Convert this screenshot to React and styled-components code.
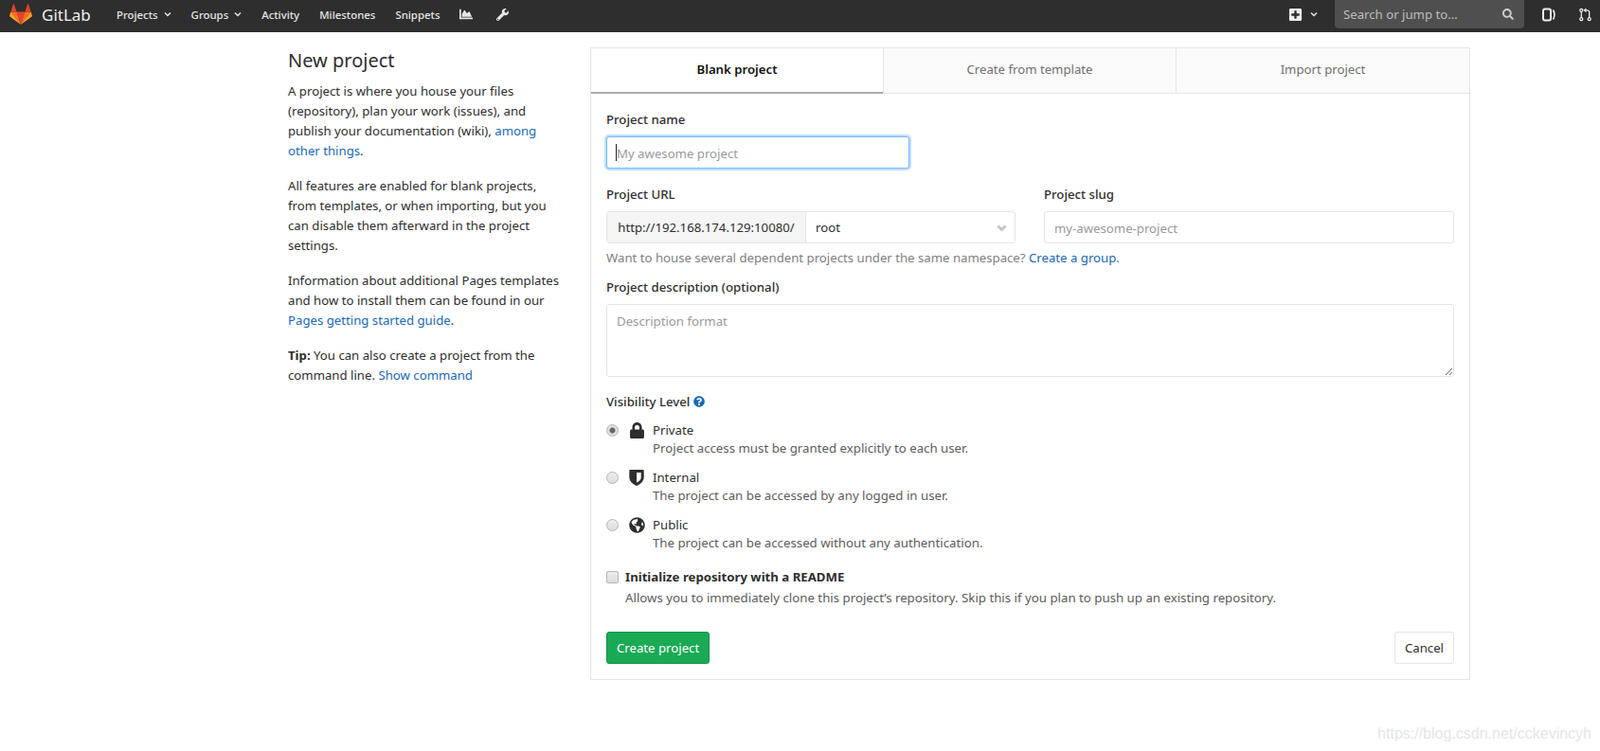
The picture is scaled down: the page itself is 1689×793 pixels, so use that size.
import React from "react";
import styled, { createGlobalStyle } from "styled-components";
import {
  FaChartArea,
  FaWrench,
  FaPlusSquare,
  FaSearch,
  FaLock,
  FaGlobeAmericas,
  FaQuestionCircle,
} from "react-icons/fa";

const GlobalStyle = createGlobalStyle`
  html, body {
    margin: 0;
    padding: 0;
    background: #fff;
    font-family: "Noto Sans", "Open Sans", sans-serif;
    font-size: 13.5px;
    color: #2e2e2e;
  }
  * { box-sizing: border-box; }
  a { color: #1b69b6; text-decoration: none; }
`;

const Page = styled.div`
  position: relative;
  height: 793px;
  overflow: hidden;
`;

const Navbar = styled.header`
  height: 34px;
  background: #2e2e2e;
  display: flex;
  align-items: flex-start;
  color: #e6e6e6;
`;

const Brand = styled.div`
  display: flex;
  align-items: center;
  gap: 10px;
  height: 30px;
  margin-left: 10px;
  width: 113px;
  font-size: 17px;
  color: #f0f0f0;
`;

const NavLinks = styled.nav`
  display: flex;
  align-items: center;
  height: 30px;
`;

const NavLink = styled.a`
  display: flex;
  align-items: center;
  gap: 6px;
  color: #e6e6e6;
  font-size: 11.4px;
  font-weight: 500;
  margin-right: ${(p) => p.$gap || 21}px;
`;

const NavRight = styled.div`
  margin-left: auto;
  display: flex;
  align-items: center;
  height: 30px;
  padding-right: 9px;
`;

const NavIcon = styled.span`
  display: flex;
  margin-right: ${(p) => p.$gap || 0}px;
`;

const SearchBox = styled.div`
  width: 200px;
  height: 30px;
  margin: 0 19px 0 18px;
  padding: 0 11px 0 9px;
  border-radius: 0 0 4px 4px;
  background: #4f4f4f;
  color: #bdbdbd;
  font-size: 13.2px;
  display: flex;
  align-items: center;
  justify-content: space-between;
`;

const Layout = styled.main`
  display: grid;
  grid-template-columns: 319px 929px;
  padding: 16px 0 0 304px;
`;

const Intro = styled.aside`
  width: 300px;
`;

const Title = styled.h1`
  margin: 0 0 8px;
  font-size: 20px;
  font-weight: 400;
  line-height: 28px;
`;

const IntroText = styled.p`
  margin: 0 0 16px;
  max-width: ${(p) => p.$width || 285}px;
  font-size: 13.2px;
  line-height: 21px;
  color: #2e2e2e;
`;

const Panel = styled.section`
  border: 1px solid #e5e5e5;
  height: 668px;
`;

const Tabs = styled.div`
  display: grid;
  grid-template-columns: 308px 309px 1fr;
  height: 48px;
`;

const Tab = styled.div`
  display: flex;
  align-items: center;
  justify-content: center;
  font-size: 13.2px;
  font-weight: ${(p) => (p.$active ? 600 : 400)};
  color: ${(p) => (p.$active ? "#111" : "#707070")};
  background: ${(p) => (p.$active ? "#fff" : "#fafafa")};
  border-bottom: ${(p) => (p.$active ? "2px solid #aaa" : "1px solid #e5e5e5")};
  border-left: ${(p) => (p.$first ? "none" : "1px solid #e5e5e5")};
  padding-bottom: ${(p) => (p.$active ? 2 : 3)}px;
`;

const Form = styled.form`
  padding: 17px 16px 0 16px;
`;

const Label = styled.label`
  display: block;
  font-size: 13.2px;
  font-weight: 500;
  line-height: 20px;
  color: #2e2e2e;
  margin-bottom: 8px;
`;

const InputWrap = styled.div`
  position: relative;
  width: ${(p) => p.$width || "100%"};
  margin-bottom: 17px;
`;

const TextInput = styled.input`
  display: block;
  width: 100%;
  height: 34px;
  padding: 1px 10px 0;
  font: inherit;
  font-size: 13.2px;
  color: #2e2e2e;
  background: #fff;
  border: 1px solid ${(p) => (p.$focus ? "#73b9ff" : "#e5e5e5")};
  border-radius: 3px;
  outline: none;
  box-shadow: ${(p) => (p.$focus ? "0 0 0 2px rgba(115,185,255,0.45)" : "none")};
  &::placeholder { color: #9a9a9a; opacity: 1; }
`;

const Caret = styled.span`
  position: absolute;
  left: 10px;
  top: 8px;
  width: 1px;
  height: 18px;
  background: #222;
`;

const UrlRow = styled.div`
  display: grid;
  grid-template-columns: 432px 433px;
  column-gap: 30px;
`;

const InputGroup = styled.div`
  display: flex;
  height: 34px;
  border: 1px solid #e5e5e5;
  border-radius: 3px;
  font-size: 13.2px;
`;

const Addon = styled.div`
  width: 210px;
  flex: none;
  display: flex;
  align-items: center;
  justify-content: center;
  background: #f5f5f5;
  border-right: 1px solid #e5e5e5;
  white-space: nowrap;
`;

const SelectBox = styled.div`
  flex: 1;
  display: flex;
  align-items: center;
  justify-content: space-between;
  padding: 0 8px 0 10px;
`;

const Help = styled.p`
  margin: 6px 0 ${(p) => p.$mb ?? 0}px;
  font-size: 13.2px;
  line-height: 19px;
  color: #808080;
`;

const TextArea = styled.textarea`
  display: block;
  width: 100%;
  height: 77px;
  padding: 8px 10px;
  font: inherit;
  font-size: 13.2px;
  border: 1px solid #e5e5e5;
  border-radius: 3px;
  outline: none;
  margin-bottom: 16px;
  &::placeholder { color: #9a9a9a; opacity: 1; }
`;

const VisibilityTitle = styled.div`
  display: flex;
  align-items: center;
  gap: 4px;
  font-size: 13.2px;
  font-weight: 500;
  line-height: 20px;
  margin-bottom: 10px;
  svg { color: #1b69b6; }
`;

const Option = styled.div`
  display: grid;
  grid-template-columns: 20px 29px 1fr;
  height: 50px;
`;

const Radio = styled.input.attrs({ type: "radio" })`
  appearance: none;
  width: 13px;
  height: 13px;
  margin: 4px 0 0 0;
  border-radius: 50%;
  border: 1px solid #b5b5b5;
  background: ${(p) =>
    p.defaultChecked
      ? "radial-gradient(circle, #666 0 2.5px, #e0e0e0 3.5px)"
      : "linear-gradient(#eee, #dcdcdc)"};
`;

const OptionIcon = styled.span`
  display: flex;
  justify-content: center;
  width: 24px;
  padding-top: 2px;
  color: #2e2e2e;
`;

const OptionName = styled.div`
  font-size: 13.2px;
  line-height: 20px;
  color: #2e2e2e;
`;

const OptionDesc = styled.div`
  font-size: 13.25px;
  line-height: 18px;
  color: #5c5c5c;
  margin-top: ${(p) => p.$mt || 0}px;
`;

const ReadmeRow = styled.div`
  display: grid;
  grid-template-columns: 20px 1fr;
  margin-top: 5px;
`;

const Checkbox = styled.input.attrs({ type: "checkbox" })`
  appearance: none;
  width: 13px;
  height: 13px;
  margin: 4px 0 0 0;
  border: 1px solid #b5b5b5;
  border-radius: 2px;
  background: linear-gradient(#eee, #dcdcdc);
`;

const ReadmeTitle = styled.div`
  font-size: 13.2px;
  font-weight: 700;
  line-height: 20px;
`;

const Actions = styled.div`
  display: flex;
  justify-content: space-between;
  margin-top: 27px;
`;

const Button = styled.button`
  height: 34px;
  padding: 0 10px;
  font: inherit;
  font-size: 13.2px;
  border-radius: 3px;
  color: ${(p) => (p.$primary ? "#fff" : "#2e2e2e")};
  background: ${(p) => (p.$primary ? "#1aaa55" : "#fff")};
  border: 1px solid ${(p) => (p.$primary ? "#168f48" : "#e5e5e5")};
`;

const Watermark = styled.div`
  position: absolute;
  right: 9px;
  bottom: 9px;
  font-family: "Liberation Sans", sans-serif;
  font-size: 16px;
  color: #e6e6e6;
`;

function Chevron({ color = "currentColor", size = 8, width = 1.5 }) {
  return (
    <svg width={size} height={size} viewBox="0 0 8 8" fill="none">
      <path d="M1 2.5 4 5.5 7 2.5" stroke={color} strokeWidth={width} />
    </svg>
  );
}

function Tanuki() {
  return (
    <svg width="24" height="22" viewBox="0 0 24 22">
      <path d="M12 22 16.4 8.4H7.6Z" fill="#e24329" />
      <path d="M12 22 7.6 8.4H1.4Z" fill="#fc6d26" />
      <path d="M1.4 8.4.1 12.5c-.1.4 0 .8.3 1L12 22Z" fill="#fca326" />
      <path d="M1.4 8.4H7.6L4.9.5c-.1-.4-.7-.4-.9 0Z" fill="#e24329" />
      <path d="M12 22 16.4 8.4H22.6Z" fill="#fc6d26" />
      <path d="M22.6 8.4 23.9 12.5c.1.4 0 .8-.3 1L12 22Z" fill="#fca326" />
      <path d="M22.6 8.4H16.4L19.1.5c.1-.4.7-.4.9 0Z" fill="#e24329" />
    </svg>
  );
}

function IssuesIcon() {
  return (
    <svg width="14" height="15" viewBox="0 0 14 15" fill="none" stroke="#eee" strokeWidth="2">
      <rect x="1" y="1.5" width="8" height="12" rx="2" />
      <path d="M11.5 2.5c1.6 2.8 1.6 7.2 0 10" strokeWidth="1.6" />
    </svg>
  );
}

function MergeIcon() {
  return (
    <svg width="13" height="15" viewBox="0 0 14 15" fill="none" stroke="#eee" strokeWidth="1.4">
      <circle cx="2.5" cy="2.5" r="1.6" />
      <circle cx="2.5" cy="12.5" r="1.6" />
      <circle cx="11.5" cy="12.5" r="1.6" />
      <path d="M2.5 4v7M11.5 11V4.5C11.5 3 10.5 2.5 9 2.5H6.5" />
      <path d="M8 .8 6 2.5 8 4.2" />
    </svg>
  );
}

function ShieldIcon() {
  return (
    <svg width="16" height="17" viewBox="0 0 16 17">
      <path
        d="M1 0h14c.4 0 .7.3.7.7V8c0 4.6-4.5 7.6-7.7 9C4.8 15.6.3 12.6.3 8V.7C.3.3.6 0 1 0Z"
        fill="#2e2e2e"
      />
      <path d="M8 3h4.7v5.2c0 2.6-2.6 4.4-4.7 5.4Z" fill="#fff" />
    </svg>
  );
}

const navItems = [
  { label: "Projects", caret: true },
  { label: "Groups", caret: true },
  { label: "Activity" },
  { label: "Milestones" },
  { label: "Snippets" },
];

const tabs = ["Blank project", "Create from template", "Import project"];

const levels = [
  {
    name: "Private",
    desc: "Project access must be granted explicitly to each user.",
    icon: <FaLock size={17} />,
    checked: true,
  },
  {
    name: "Internal",
    desc: "The project can be accessed by any logged in user.",
    icon: <ShieldIcon />,
  },
  {
    name: "Public",
    desc: "The project can be accessed without any authentication.",
    icon: <FaGlobeAmericas size={17} />,
  },
];

export default function App() {
  return (
    <Page>
      <GlobalStyle />
      <Navbar>
        <Brand>
          <Tanuki />
          GitLab
        </Brand>
        <NavLinks>
          {navItems.map((item) => (
            <NavLink key={item.label}>
              {item.label}
              {item.caret && <Chevron />}
            </NavLink>
          ))}
          <NavLink $gap={25}>
            <FaChartArea size={14} />
          </NavLink>
          <NavLink>
            <FaWrench size={13} />
          </NavLink>
        </NavLinks>
        <NavRight>
          <NavIcon $gap={8}>
            <FaPlusSquare size={15} color="#eee" />
          </NavIcon>
          <Chevron />
          <SearchBox>
            Search or jump to…
            <FaSearch size={12} color="#ccc" />
          </SearchBox>
          <NavIcon $gap={25}>
            <IssuesIcon />
          </NavIcon>
          <NavIcon>
            <MergeIcon />
          </NavIcon>
        </NavRight>
      </Navbar>
      <Layout>
        <Intro>
          <Title>New project</Title>
          <IntroText>
            A project is where you house your files (repository), plan your work
            (issues), and publish your documentation (wiki), <a href="#">among other things</a>.
          </IntroText>
          <IntroText>
            All features are enabled for blank projects, from templates, or when
            importing, but you can disable them afterward in the project settings.
          </IntroText>
          <IntroText $width={300}>
            Information about additional Pages templates and how to install them
            can be found in our <a href="#">Pages getting started guide</a>.
          </IntroText>
          <IntroText>
            <b>Tip:</b> You can also create a project from the command line.{" "}
            <a href="#">Show command</a>
          </IntroText>
        </Intro>
        <Panel>
          <Tabs>
            {tabs.map((t, i) => (
              <Tab key={t} $active={i === 0} $first={i === 0}>
                {t}
              </Tab>
            ))}
          </Tabs>
          <Form>
            <Label>Project name</Label>
            <InputWrap $width="320px">
              <TextInput $focus placeholder="My awesome project" />
              <Caret />
            </InputWrap>
            <UrlRow>
              <div>
                <Label>Project URL</Label>
                <InputGroup>
                  <Addon>http://192.168.174.129:10080/</Addon>
                  <SelectBox>
                    root
                    <Chevron color="#c4c4c4" size={11} width={2} />
                  </SelectBox>
                </InputGroup>
              </div>
              <div>
                <Label>Project slug</Label>
                <TextInput placeholder="my-awesome-project" />
              </div>
            </UrlRow>
            <Help $mb={11}>
              Want to house several dependent projects under the same namespace?{" "}
              <a href="#">Create a group.</a>
            </Help>
            <Label>Project description (optional)</Label>
            <TextArea placeholder="Description format" />
            <VisibilityTitle>
              Visibility Level <FaQuestionCircle size={12} />
            </VisibilityTitle>
            {levels.map((l) => (
              <Option key={l.name}>
                <Radio name="visibility" defaultChecked={l.checked} />
                <OptionIcon>{l.icon}</OptionIcon>
                <div>
                  <OptionName>{l.name}</OptionName>
                  <OptionDesc>{l.desc}</OptionDesc>
                </div>
              </Option>
            ))}
            <ReadmeRow>
              <Checkbox />
              <div>
                <ReadmeTitle>Initialize repository with a README</ReadmeTitle>
                <OptionDesc $mt={3}>
                  Allows you to immediately clone this project’s repository. Skip this if you plan to push up an existing repository.
                </OptionDesc>
              </div>
            </ReadmeRow>
            <Actions>
              <Button $primary type="button">Create project</Button>
              <Button type="button">Cancel</Button>
            </Actions>
          </Form>
        </Panel>
      </Layout>
      <Watermark>https://blog.csdn.net/cckevincyh</Watermark>
    </Page>
  );
}
